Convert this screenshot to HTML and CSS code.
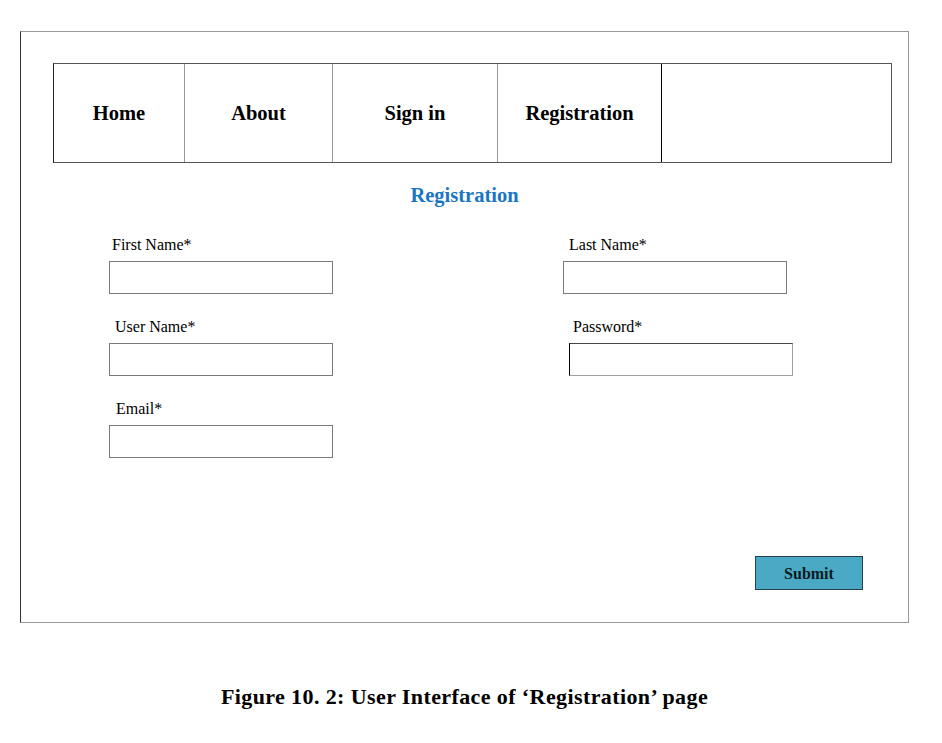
FILE: index.html
```html
<!DOCTYPE html>
<html lang="en">
<head>
<meta charset="utf-8">
<title>Registration</title>
<link rel="stylesheet" href="styles.css">
</head>
<body>
<div class="frame">
  <nav class="nav">
    <div class="nav-cell c1">Home</div>
    <div class="nav-cell c2">About</div>
    <div class="nav-cell c3">Sign in</div>
    <div class="nav-cell c4">Registration</div>
    <div class="nav-cell c5"></div>
  </nav>
  <h1 class="title">Registration</h1>
  <form class="form">
    <div class="field">
      <label class="label l-first">First Name*</label>
      <div class="input"></div>
    </div>
    <div class="field f-last">
      <label class="label l-last">Last Name*</label>
      <div class="input"></div>
    </div>
    <div class="field">
      <label class="label l-user">User Name*</label>
      <div class="input"></div>
    </div>
    <div class="field f-pass">
      <label class="label l-pass">Password*</label>
      <div class="input i-pass"></div>
    </div>
    <div class="field">
      <label class="label l-email">Email*</label>
      <div class="input"></div>
    </div>
  </form>
  <button class="submit" type="button">Submit</button>
</div>
<p class="caption">Figure 10. 2: User Interface of ‘Registration’ page</p>
</body>
</html>
```
FILE: styles.css
```css
html, body {
  margin: 0;
  padding: 0;
  background: #ffffff;
}
body {
  font-family: "Liberation Serif", "Times New Roman", serif;
  color: #000;
  width: 942px;
  height: 743px;
  overflow: hidden;
}
.frame {
  box-sizing: border-box;
  margin: 31px 0 0 20px;
  width: 889px;
  height: 592px;
  border: 1px solid #9a9a9a;
  border-left-color: #333;
  padding: 31px 16px 32px 32px;
  display: flex;
  flex-direction: column;
}
.nav {
  box-sizing: border-box;
  width: 839px;
  height: 100px;
  border: 1px solid #555;
  border-left-color: #222;
  display: grid;
  grid-template-columns: 131px 148px 165px 164px 229px;
}
.nav-cell {
  box-sizing: border-box;
  border-right: 1px solid #9a9a9a;
  display: flex;
  align-items: center;
  justify-content: center;
  font-weight: bold;
  font-size: 20.5px;
}
.nav-cell.c4 { border-right-color: #000; }
.nav-cell.c5 { border-right: none; }
.title {
  margin: 20px 0 0 0;
  width: 823px;
  text-align: center;
  font-size: 20.5px;
  line-height: 24px;
  font-weight: bold;
  color: #1b75c3;
}
.form {
  margin: 29px 0 0 56px;
  display: grid;
  grid-template-columns: 454px 240px;
  row-gap: 24px;
}
.field {
  display: flex;
  flex-direction: column;
}
.label {
  font-size: 16px;
  line-height: 17px;
  height: 17px;
  margin-bottom: 8px;
  letter-spacing: 0;
}
.l-first { margin-left: 3px; }
.l-user { margin-left: 6px; }
.l-email { margin-left: 7px; }
.l-last { margin-left: 6px; }
.f-pass { padding-left: 6px; }
.l-pass { margin-left: 4px; }
.input {
  box-sizing: border-box;
  width: 224px;
  height: 33px;
  border: 1px solid #7a7a7a;
  background: #fff;
}
.i-pass {
  border-color: #a0a0a0;
  border-left-color: #000;
  border-top-color: #444;
}
.submit {
  box-sizing: border-box;
  margin-top: auto;
  align-self: flex-end;
  margin-right: 29px;
  width: 108px;
  height: 34px;
  background: #4aaac5;
  border: 1px solid #24404c;
  font-family: "Liberation Serif", "Times New Roman", serif;
  font-weight: bold;
  font-size: 16px;
  color: #0b1a22;
  padding: 1px 0 0 0;
}
.caption {
  margin: 62px 0 0 20px;
  width: 889px;
  text-align: center;
  font-weight: bold;
  font-size: 22px;
  letter-spacing: 0.4px;
  line-height: 24px;
}
```
